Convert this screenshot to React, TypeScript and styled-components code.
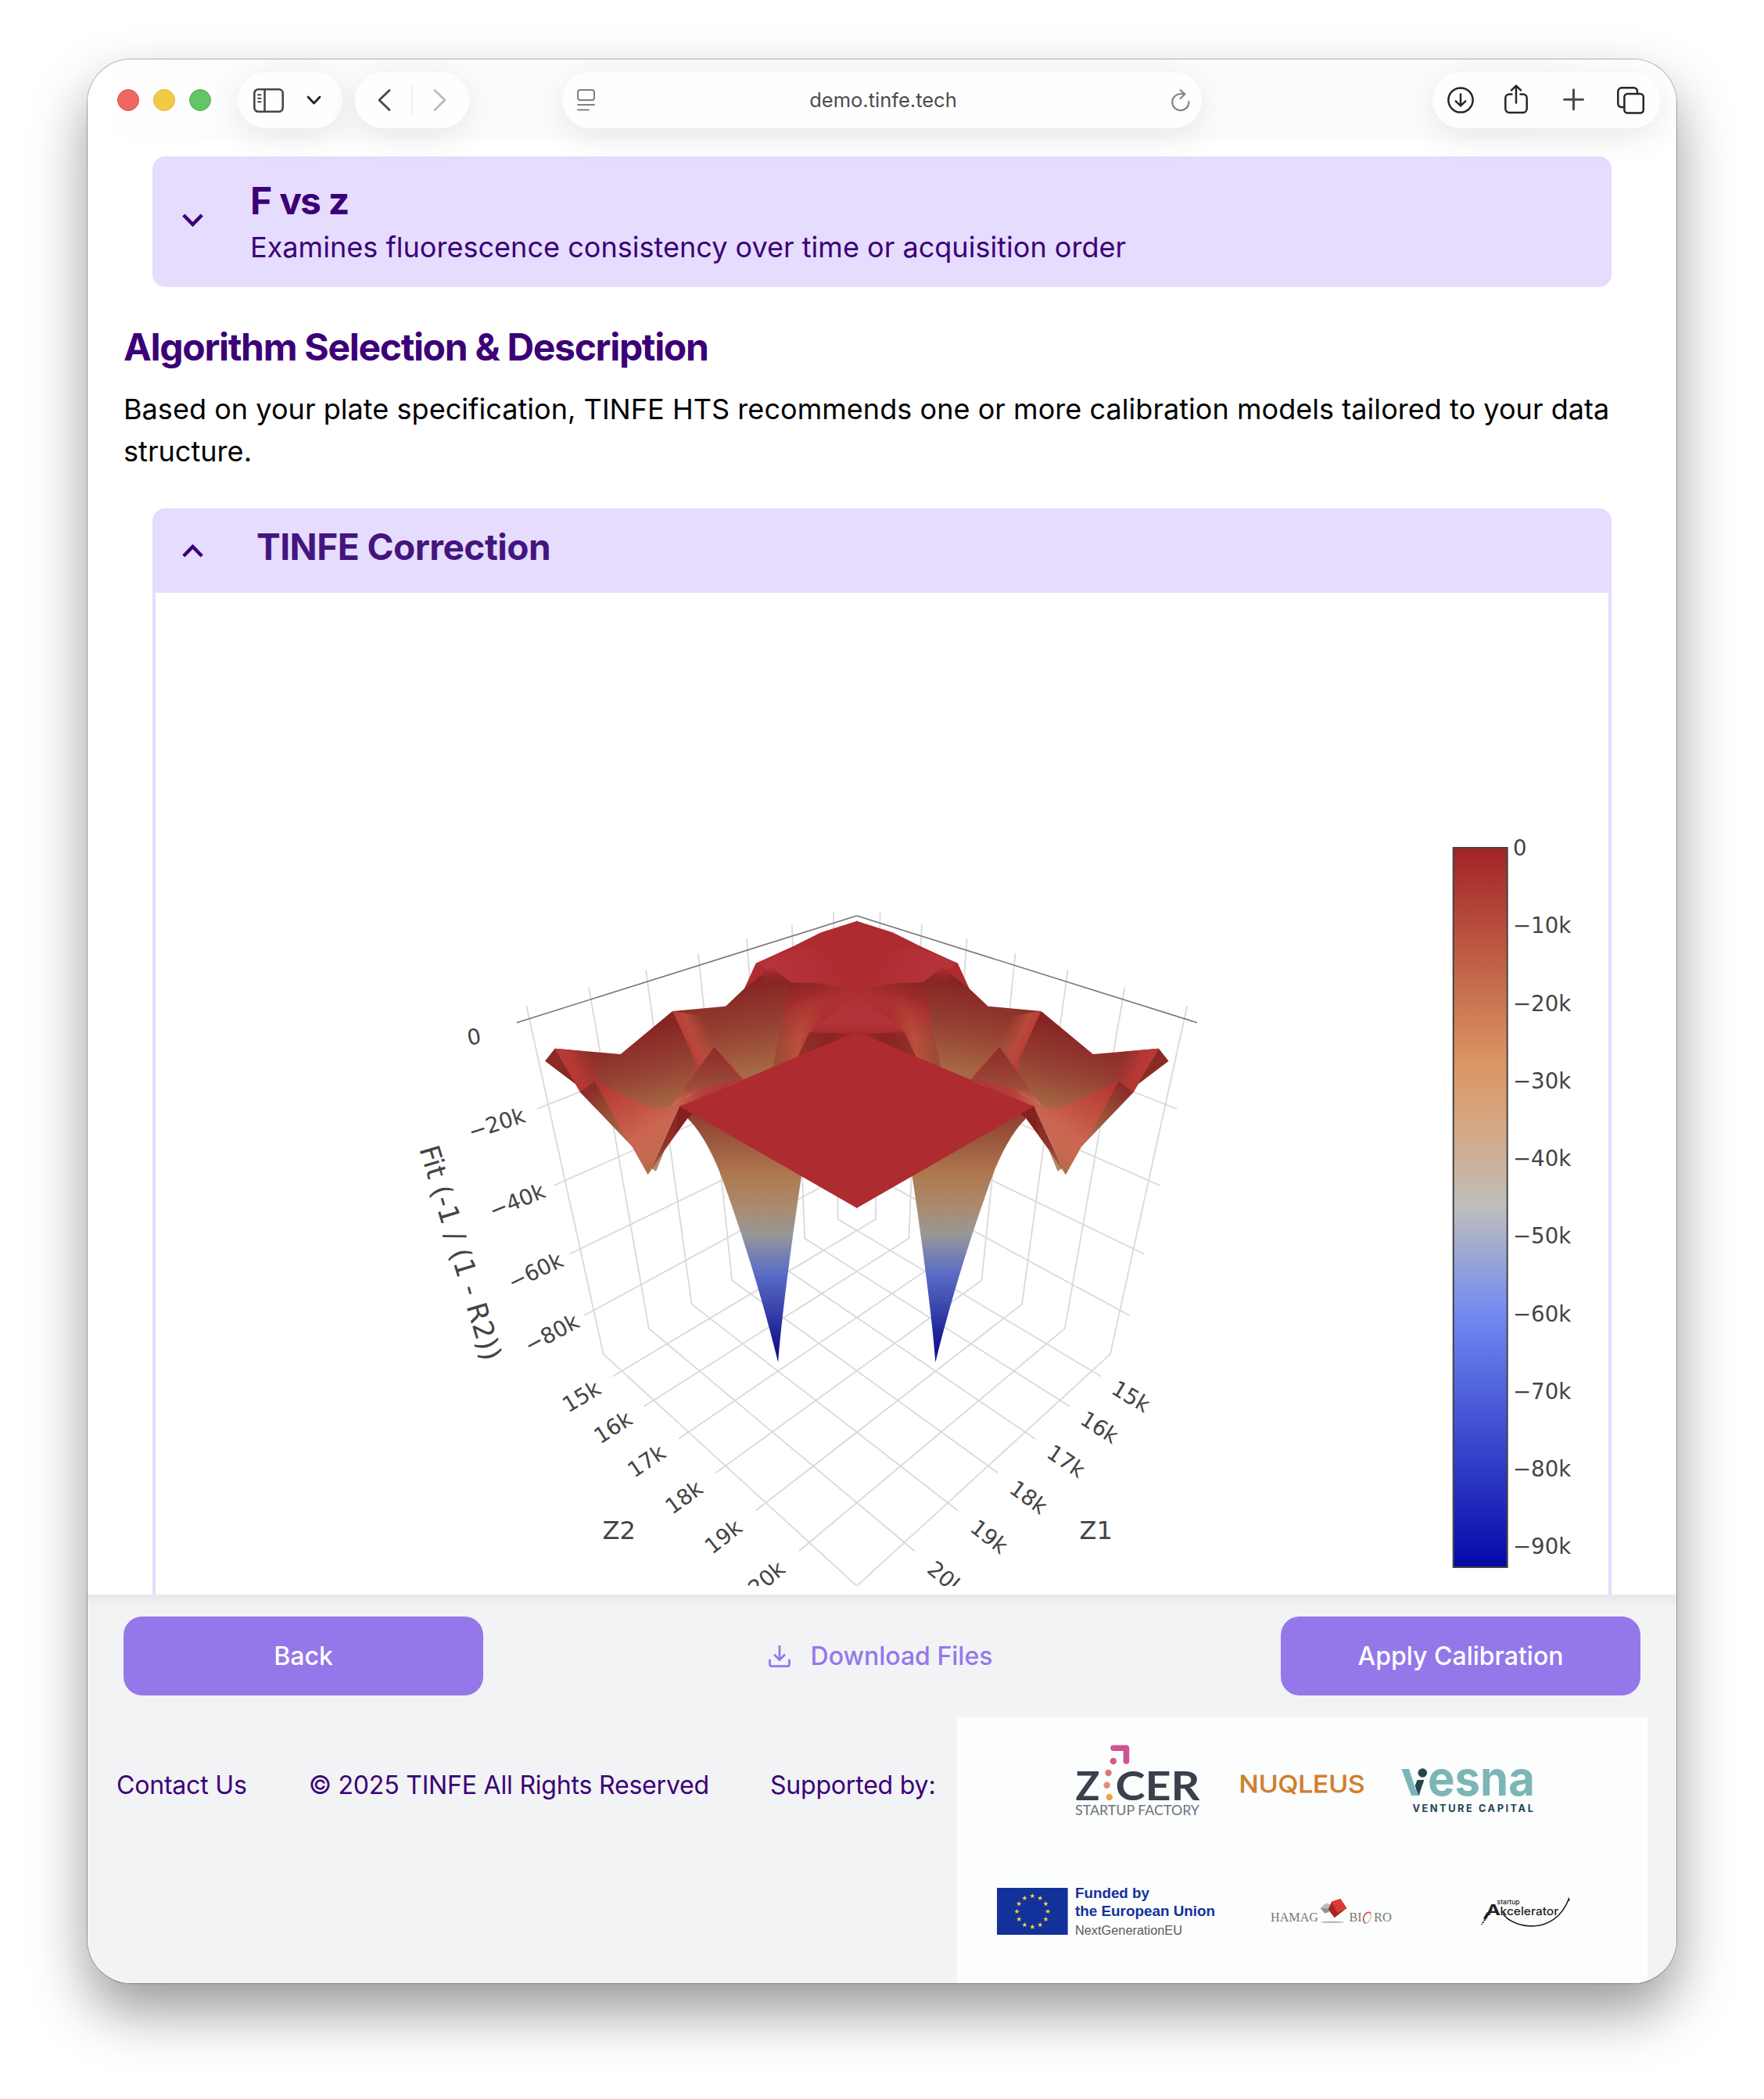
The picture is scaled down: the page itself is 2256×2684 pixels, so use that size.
import styled, { createGlobalStyle } from 'styled-components';

const GlobalStyle = createGlobalStyle`
  * {
    box-sizing: border-box;
  }
  body {
    margin: 0;
    background: #ffffff;
    font-family: Inter, 'Liberation Sans', sans-serif;
  }
  h2, h3, p {
    margin: 0;
  }
`;

const Desktop = styled.div`
  width: 2256px;
  height: 2684px;
  padding: 76px 112px 148px;
  overflow: hidden;
`;

const Window = styled.div`
  display: flex;
  flex-direction: column;
  height: 2460px;
  border-radius: 56px;
  overflow: hidden;
  background: #ffffff;
  box-shadow: 0 0 0 1px rgba(0, 0, 0, 0.28), 0 36px 72px rgba(0, 0, 0, 0.4);
`;

const Toolbar = styled.header`
  position: relative;
  z-index: 1;
  flex: none;
  display: flex;
  align-items: center;
  height: 104px;
  padding: 0 20px 0 38px;
  background: linear-gradient(90deg, #ffffff, #fcfbfe 12%, #fcfcfe 90%, #ffffff);
`;

const Lights = styled.div`
  display: flex;
  gap: 18px;
`;

const Light = styled.span<{ $fill: string; $edge: string }>`
  width: 28px;
  height: 28px;
  border-radius: 50%;
  background: ${(p) => p.$fill};
  border: 1px solid ${(p) => p.$edge};
`;

const Pill = styled.div<{ $width: number; $left?: string; $pad: string }>`
  display: flex;
  align-items: center;
  justify-content: space-between;
  width: ${(p) => p.$width}px;
  height: 72px;
  margin-left: ${(p) => p.$left ?? '16px'};
  padding: ${(p) => p.$pad};
  border-radius: 36px;
  background: #fffeff;
  box-shadow: 0 10px 44px rgba(0, 0, 0, 0.09);

  svg {
    display: block;
    flex: none;
    overflow: visible;
    fill: none;
    stroke-linecap: round;
    stroke-linejoin: round;
  }
`;

const Divider = styled.span`
  width: 2px;
  height: 40px;
  background: #f0eff1;
`;

const Address = styled.span`
  font-size: 25.5px;
  line-height: 32px;
  color: #4c4c4c;
`;

const Content = styled.main`
  flex: none;
  height: 1859px;
  padding-top: 20px;
  overflow: hidden;
`;

const Panel = styled.section`
  margin: 0 83px;
  border-radius: 16px;
  background: #e6dcfd;
  overflow: hidden;
  color: #3c0078;
`;

const PanelHeader = styled.div<{ $height: number; $lift?: number }>`
  display: flex;
  align-items: center;
  height: ${(p) => p.$height}px;
  padding-left: 38px;

  svg {
    display: block;
    flex: none;
    margin-bottom: ${(p) => p.$lift ?? 0}px;
  }
`;

const PanelText = styled.div`
  display: flex;
  flex-direction: column;
  gap: 2px;
  margin: 2px 0 0 60px;
`;

const PanelTitle = styled.h3`
  font-size: 48px;
  line-height: 60px;
  font-weight: 700;
  letter-spacing: -2px;
  word-spacing: 1.6px;
`;

const PanelSubtitle = styled.p`
  font-size: 36px;
  line-height: 54px;
  letter-spacing: 0.03px;
`;

const PlotTitle = styled.h3`
  margin-left: 68px;
  padding-bottom: 11px;
  font-size: 46px;
  line-height: 56px;
  font-weight: 700;
  letter-spacing: -0.5px;
  color: #43157f;
`;

const PanelBody = styled.div`
  height: 1400px;
  margin: 0 4px;
  background: #ffffff;

  svg {
    display: block;
  }
`;

const Intro = styled.div`
  padding: 47px 40px 46px 46px;
`;

const Heading = styled.h2`
  font-size: 48px;
  line-height: 60px;
  font-weight: 700;
  letter-spacing: -1.3px;
  color: #3c0078;
`;

const Paragraph = styled.p`
  margin-top: 22px;
  font-size: 36px;
  line-height: 54px;
  letter-spacing: 0.05px;
  color: #000000;
`;

const Footer = styled.footer`
  flex: 1;
  background: linear-gradient(#e6e8ea, #f2f3f5 16px);
`;

const Actions = styled.div`
  display: flex;
  align-items: center;
  justify-content: space-between;
  padding: 28px 46px;
`;

const Button = styled.button`
  width: 460px;
  height: 101px;
  border: 0;
  border-radius: 24px;
  background: #9478ea;
  color: #ffffff;
  font: 500 32px Inter, sans-serif;
`;

const DownloadLink = styled.a`
  display: flex;
  align-items: center;
  gap: 26px;
  margin-right: 4px;
  color: #9478ea;
  font-size: 32px;
  font-weight: 500;
`;

const Credits = styled.div`
  display: flex;
  height: 340px;
  padding: 0 37px;
  font-size: 32px;
  line-height: 48px;
  letter-spacing: -0.19px;
  color: #3c0078;
`;

const CreditText = styled.span<{ $gap?: number }>`
  margin: 63px ${(p) => p.$gap ?? 0}px 0 0;
  white-space: nowrap;
`;

const Supporters = styled.div`
  width: 883px;
  margin-left: auto;
  padding-top: 30px;
  background: #fcfdfd;
  letter-spacing: 0;
`;

const LogoRow = styled.div<{ $left: number; $top?: number }>`
  display: flex;
  margin: ${(p) => p.$top ?? 0}px 0 0 ${(p) => p.$left}px;

  svg {
    display: block;
    flex: none;
  }
`;

const Gap = styled.span<{ $width: number }>`
  width: ${(p) => p.$width}px;
`;

const Chevron = ({ up }: { up?: boolean }) => (
  <svg width="27" height="18" viewBox="0 0 27 18" fill="none" stroke="#3c0078" strokeWidth="4.6">
    <path d={up ? 'M1.8 16 L13.5 4 L25.2 16' : 'M1.8 2 L13.5 14 L25.2 2'} />
  </svg>
);

// ---------- chart ----------

const CX = 1095.8;
const mirror = (x: number) => 2 * CX - x;

type Point = [number, number];

// one entry per 1k tick: top of the wall, wall/floor kink, end of the floor line
const gridLines: [Point, Point, Point][] = [
  [[673.3, 1286.3], [771.7, 1731.6], [1110, 2041]],
  [[753, 1262.3], [829.8, 1698.8], [1169.6, 1983.3]],
  [[826, 1240], [884.6, 1667.6], [1225.2, 1931.7]],
  [[893, 1219.3], [936.2, 1637.3], [1276, 1883.3]],
  [[955, 1200.4], [984.5, 1609], [1323.6, 1839.7]],
  [[1012.8, 1182.3], [1029.2, 1583.4], [1367.8, 1798.3]],
  [[1066, 1166.3], [1071.7, 1559], [1408, 1760]],
];

const levels: [Point, number][] = [
  [[686.4, 1418], 1257],
  [[708.5, 1515.7], 1345],
  [[728.8, 1603.2], 1425.6],
  [[746.8, 1682.3], 1493],
];

const fitTicks: [string, number, number, number][] = [
  ['0', 606.2, 1325.4, -10],
  ['−20k', 635, 1436.2, -18],
  ['−40k', 661.2, 1535, -22],
  ['−60k', 684.6, 1625, -25.5],
  ['−80k', 705.4, 1704.5, -28],
];

const zTicks: [string, number, number, number][] = [
  ['15k', 1446.6, 1785.3, 31],
  ['16k', 1406.4, 1824.8, 32.5],
  ['17k', 1363.6, 1868, 34],
  ['18k', 1315.6, 1914.2, 36],
  ['19k', 1265.3, 1964.6, 38],
  ['20k', 1210, 2018, 40],
];

const scaleTicks = ['0', '−10k', '−20k', '−30k', '−40k', '−50k', '−60k', '−70k', '−80k', '−90k'];

const Grid = () => (
  <g fill="none" stroke="#d9d9d9" strokeWidth="1.8">
    {gridLines.map((line, i) => (
      <polyline key={i} points={line.join(' ')} />
    ))}
    {levels.map(([[x, y], cy]) => (
      <path key={y} d={`M${x} ${y} L${CX} ${cy}`} />
    ))}
    <path d={`M660.7 1307.7 L${CX} 1171`} stroke="#757575" strokeWidth="1.6" />
  </g>
);

const Surface = () => (
  <g>
    {/* rear plateau */}
    <path d="M1096.5 1177.5 L1050 1192.3 L1012.3 1211 L966.7 1231.7 L952 1264 L960 1290 L1096.5 1290 Z" fill="#ae2b30" />
    <path d="M966.7 1231.7 C990 1222 1010 1215 1030 1211 C1052 1210 1075 1222 1096.5 1230 L1096.5 1262 L1043 1256.7 L1012.3 1256.7 Z" fill="url(#plateau)" />
    {/* middle basin */}
    <path d="M952 1264 L986.7 1237.3 L1012.3 1256.7 L1043 1256.7 L1096.5 1268 L1096.5 1330 L988 1366 L950 1382 L880 1400 L860 1293 L928 1286.7 Z" fill="url(#basin)" />
    <path d="M860 1293 L890 1358.3 L886 1378 L914 1350 L940 1350 L905 1300 Z" fill="url(#rib)" />
    <path d="M976 1246 L986.7 1237 L1003 1250 L996 1262 L978 1262 Z" fill="url(#hump)" />
    <path d="M1010 1257 L1043 1256.7 L1096.5 1268 L1096.5 1330 L988 1366 L1000 1305 Z" fill="url(#flank)" />
    <path d="M1010 1256.7 L1043 1256.7 L1096.5 1268 L1040 1316 L1000 1330 L1003 1290 Z" fill="url(#flankTop)" />
    <path d="M1096.5 1268.3 L1035 1320 L1076 1321.5 L1096.5 1319.5 Z" fill="url(#wedge)" />
    <path d="M1035 1320 L1076 1321.5 L1096.5 1320 L1020 1352 Z" fill="url(#pocket)" />
    {/* outer basin */}
    <path d="M709.7 1340.7 L793.7 1348 L860 1293 L890 1358.3 L886.7 1376.7 L872 1420 L820 1424 L742 1396.7 Z" fill="url(#outer)" />
    <path d="M709.7 1340.7 L765 1345.5 L785 1395 L760.7 1382.3 L742 1396.7 L735.7 1385.3 Z" fill="url(#outerFlank)" />
    <path d="M697 1356.7 L709.7 1340.7 L737 1387 Z" fill="#8a2a27" />
    {/* small peak */}
    <path d="M914 1337.7 L951 1381 L896.7 1391.7 L858.3 1415 Z" fill="url(#peak)" />
    <path d="M914 1337.7 L951 1381 L947 1382" fill="none" stroke="#bd4a3a" strokeWidth="1.5" />
    <path d="M950 1380.5 L896.7 1391.7 L858.3 1415 L870 1416 Z" fill="url(#peakFoot)" />
    {/* front dip */}
    <path d="M742 1396.7 L760.7 1382.3 L812 1468 L808.3 1466 Z" fill="url(#dipShade)" />
    <path d="M850 1470.7 L839 1497.7 L832 1493 Z" fill="#b08a62" />
    <path d="M760.7 1382.3 C785 1392 800 1402 820 1410 C833 1416.5 847 1417 858.3 1414.5 L870 1414 L850 1456 L828.7 1502.3 L808.3 1466 L797 1450 Z" fill="url(#dip)" />
    <path d="M869.3 1414.7 L890 1422 L879.3 1430 L850 1470.7 L828.7 1502.3 Z" fill="url(#fold)" />
    {/* spike */}
    <path d="M868 1414 L884 1419 L879.6 1430.6 C896 1446 912 1476 922.8 1505 C940 1552 970 1640 995.2 1742 C999 1690 1012 1590 1025 1504 L1030 1430 L900 1410 Z" fill="url(#spike)" />
    <path d="M869.3 1414.7 L892 1420 L879.3 1430 L864 1450 Z" fill="#84211f" />
    <path d="M869.3 1414.7 L1096.3 1319 V1545 Z" fill="#ae2b30" />
  </g>
);

const SurfacePaints = () => (
  <defs>
    <linearGradient id="scale" x1="0" y1="0" x2="0" y2="1">
      <stop offset="0" stopColor="#a22325" />
      <stop offset="0.3" stopColor="#db9664" />
      <stop offset="0.4" stopColor="#d3aa88" />
      <stop offset="0.5" stopColor="#bebebc" />
      <stop offset="0.65" stopColor="#7089f2" />
      <stop offset="1" stopColor="#0508a8" />
    </linearGradient>
    <linearGradient id="plateau" gradientUnits="userSpaceOnUse" x1="1000" y1="1256" x2="1075" y2="1220">
      <stop offset="0" stopColor="#b4343a" />
      <stop offset="1" stopColor="#ae2b30" />
    </linearGradient>
    <linearGradient id="basin" gradientUnits="userSpaceOnUse" x1="930" y1="1260" x2="950" y2="1384">
      <stop offset="0" stopColor="#862423" />
      <stop offset="0.45" stopColor="#954032" />
      <stop offset="1" stopColor="#aa7046" />
    </linearGradient>
    <linearGradient id="rib" gradientUnits="userSpaceOnUse" x1="876" y1="1328" x2="905" y2="1316">
      <stop offset="0" stopColor="#bb3e35" />
      <stop offset="0.35" stopColor="#b84a3a" />
      <stop offset="1" stopColor="#b84a3a" stopOpacity="0" />
    </linearGradient>
    <linearGradient id="hump" gradientUnits="userSpaceOnUse" x1="0" y1="1240" x2="0" y2="1262">
      <stop offset="0" stopColor="#ae2b30" />
      <stop offset="1" stopColor="#862423" stopOpacity="0" />
    </linearGradient>
    <linearGradient id="flank" gradientUnits="userSpaceOnUse" x1="992" y1="1310" x2="1048" y2="1322">
      <stop offset="0" stopColor="#93382c" stopOpacity="0.2" />
      <stop offset="0.25" stopColor="#a34a36" />
      <stop offset="0.6" stopColor="#bb4f3c" />
      <stop offset="1" stopColor="#a92a2c" />
    </linearGradient>
    <linearGradient id="flankTop" gradientUnits="userSpaceOnUse" x1="1006" y1="1258" x2="1030" y2="1328">
      <stop offset="0" stopColor="#8a2424" />
      <stop offset="0.3" stopColor="#9d2b29" />
      <stop offset="0.5" stopColor="#ac3230" stopOpacity="0.8" />
      <stop offset="1" stopColor="#b03a33" stopOpacity="0" />
    </linearGradient>
    <linearGradient id="wedge" gradientUnits="userSpaceOnUse" x1="0" y1="1268" x2="0" y2="1322">
      <stop offset="0" stopColor="#b03035" />
      <stop offset="0.75" stopColor="#b33438" />
      <stop offset="1" stopColor="#a82a2c" />
    </linearGradient>
    <linearGradient id="pocket" gradientUnits="userSpaceOnUse" x1="1025" y1="0" x2="1096" y2="0">
      <stop offset="0" stopColor="#8f3029" />
      <stop offset="0.5" stopColor="#882323" />
      <stop offset="1" stopColor="#a82a2c" />
    </linearGradient>
    <linearGradient id="outer" gradientUnits="userSpaceOnUse" x1="810" y1="1318" x2="835" y2="1420">
      <stop offset="0" stopColor="#882524" />
      <stop offset="0.5" stopColor="#954033" />
      <stop offset="1" stopColor="#a66743" />
    </linearGradient>
    <linearGradient id="outerFlank" gradientUnits="userSpaceOnUse" x1="726" y1="1370" x2="768" y2="1352">
      <stop offset="0" stopColor="#b93a34" />
      <stop offset="0.3" stopColor="#b43732" />
      <stop offset="1" stopColor="#94302b" stopOpacity="0" />
    </linearGradient>
    <linearGradient id="peak" gradientUnits="userSpaceOnUse" x1="0" y1="1338" x2="0" y2="1412">
      <stop offset="0" stopColor="#8c2b28" />
      <stop offset="0.7" stopColor="#9d4a38" />
      <stop offset="1" stopColor="#cf6d56" />
    </linearGradient>
    <linearGradient id="peakFoot" gradientUnits="userSpaceOnUse" x1="862" y1="0" x2="945" y2="0">
      <stop offset="0" stopColor="#cc6650" />
      <stop offset="0.4" stopColor="#b5403a" />
      <stop offset="1" stopColor="#b03032" />
    </linearGradient>
    <linearGradient id="dipShade" gradientUnits="userSpaceOnUse" x1="752" y1="1390" x2="805" y2="1466">
      <stop offset="0" stopColor="#8a2a27" />
      <stop offset="1" stopColor="#aa7848" />
    </linearGradient>
    <linearGradient id="dip" gradientUnits="userSpaceOnUse" x1="762" y1="1388" x2="832" y2="1498">
      <stop offset="0" stopColor="#b33430" />
      <stop offset="0.4" stopColor="#c25243" />
      <stop offset="0.65" stopColor="#cb6650" />
      <stop offset="0.85" stopColor="#c56a50" />
      <stop offset="1" stopColor="#b5664a" />
    </linearGradient>
    <linearGradient id="fold" gradientUnits="userSpaceOnUse" x1="875" y1="1415" x2="835" y2="1500">
      <stop offset="0" stopColor="#821f20" />
      <stop offset="0.6" stopColor="#93352b" />
      <stop offset="1" stopColor="#b0674a" />
    </linearGradient>
    <linearGradient id="spike" gradientUnits="userSpaceOnUse" x1="0" y1="1420" x2="0" y2="1742">
      <stop offset="0" stopColor="#8f3a2e" />
      <stop offset="0.14" stopColor="#9e5c40" />
      <stop offset="0.25" stopColor="#ae784e" />
      <stop offset="0.38" stopColor="#ab8a6c" />
      <stop offset="0.49" stopColor="#989896" />
      <stop offset="0.57" stopColor="#7882b2" />
      <stop offset="0.65" stopColor="#5a6cc4" />
      <stop offset="0.78" stopColor="#3c47ae" />
      <stop offset="0.9" stopColor="#1c2096" />
      <stop offset="1" stopColor="#0a0c86" />
    </linearGradient>
  </defs>
);

const flip = `translate(${2 * CX} 0) scale(-1 1)`;

const Tick = ({ label, x, y, angle }: { label: string; x: number; y: number; angle: number }) => (
  <text x={x} y={y + 10} textAnchor="middle" transform={`rotate(${angle} ${x} ${y})`}>
    {label}
  </text>
);

const SurfacePlot = () => (
  <svg width="1858" height="1270" viewBox="199 758 1858 1270">
    <SurfacePaints />
    <Grid />
    <g transform={flip}>
      <Grid />
    </g>
    <Surface />
    <g transform={flip}>
      <Surface />
    </g>
    <g fill="#444444" fontFamily="'DejaVu Sans', Verdana, sans-serif" fontSize="27.6">
      {fitTicks.map(([label, x, y, angle]) => (
        <Tick key={label} label={label} x={x} y={y} angle={angle} />
      ))}
      {zTicks.map(([label, x, y, angle]) => (
        <g key={label}>
          <Tick label={label} x={x} y={y} angle={angle} />
          <Tick label={label} x={mirror(x) - 1.5} y={y} angle={-angle} />
        </g>
      ))}
      <text x="588.5" y="1614" fontSize="35.5" textAnchor="middle" textLength="285" transform="rotate(73.3 588.5 1602)">
        Fit (-1 / (1 - R2))
      </text>
      <text x="770.5" y="1968" fontSize="32">Z2</text>
      <text x="1380.5" y="1968" fontSize="32">Z1</text>
      {scaleTicks.map((label, i) => (
        <text key={label} x="1935" y={1094 + i * 99.25}>
          {label}
        </text>
      ))}
    </g>
    <rect x="1858.7" y="1084" width="69" height="920" fill="url(#scale)" stroke="#444444" strokeWidth="2" />
  </svg>
);

// ---------- supporter logos ----------

const ZicerLogo = () => (
  <svg width="170" height="100" viewBox="0 0 170 100">
    <path d="M54 9.2 H70.4 V26" fill="none" stroke="#cf5490" strokeWidth="7.6" strokeLinecap="round" strokeLinejoin="round" />
    <circle cx="53.8" cy="26" r="4.2" fill="#cf5c84" />
    <circle cx="47.5" cy="41" r="4.2" fill="#d9787e" />
    <circle cx="45.6" cy="56.7" r="4.2" fill="#df9174" />
    <circle cx="48.8" cy="72" r="4.2" fill="#e6a640" />
    <g fill="#3c3f4c" fontFamily="Lato, sans-serif" fontWeight="700" fontSize="51.5">
      <text x="5.5" y="75.8" textLength="31" lengthAdjust="spacingAndGlyphs">Z</text>
      <text x="56.5" y="75.8" textLength="108" lengthAdjust="spacingAndGlyphs">CER</text>
    </g>
    <text x="5" y="95" fill="#6d707b" fontFamily="Lato, sans-serif" fontSize="16.6" textLength="159" lengthAdjust="spacingAndGlyphs">
      STARTUP FACTORY
    </text>
  </svg>
);

const NuqleusLogo = () => (
  <svg width="170" height="100" viewBox="0 0 170 100">
    <text x="4.5" y="66.4" fill="#cf7f2f" stroke="#cf7f2f" strokeWidth="0.8" strokeLinejoin="round" fontFamily="Inter, sans-serif" fontWeight="400" fontSize="30" textLength="161" lengthAdjust="spacingAndGlyphs">
      NUQLEUS
    </text>
  </svg>
);

const VesnaLogo = () => (
  <svg width="180" height="100" viewBox="0 0 180 100">
    <clipPath id="vesna-arm">
      <path d="M0 30 H15.5 L28 62 V75 H0 Z" />
    </clipPath>
    <g fill="#7cb5b5" fontFamily="Inter, sans-serif" fontWeight="700" fontSize="62">
      <text x="3.5" y="70" clipPath="url(#vesna-arm)">v</text>
      <text x="38" y="70" textLength="137" lengthAdjust="spacingAndGlyphs">esna</text>
    </g>
    <path d="M24.6 50 H33.4 L26.6 69.6 L21.6 57.5 Z" fill="#27454f" />
    <circle cx="31.3" cy="41" r="5.8" fill="#27454f" />
    <text x="18.4" y="91" fill="#234450" fontFamily="Inter, sans-serif" fontWeight="700" fontSize="12.8" textLength="154.5">
      VENTURE CAPITAL
    </text>
  </svg>
);

const star = Array.from({ length: 10 }, (_, i) => {
  const r = i % 2 ? 1.4 : 3.5;
  const a = (i * Math.PI) / 5;
  return `${(r * Math.sin(a)).toFixed(2)},${(-r * Math.cos(a)).toFixed(2)}`;
}).join(' ');

const EuLogo = () => (
  <svg width="285" height="90" viewBox="0 0 285 90">
    <rect y="14" width="90.6" height="60" fill="#12319a" />
    {Array.from({ length: 12 }, (_, i) => (
      <polygon
        key={i}
        points={star}
        fill="#f4d03c"
        transform={`translate(${45.3 + 19.8 * Math.sin((i * Math.PI) / 6)} ${44.2 - 19.8 * Math.cos((i * Math.PI) / 6)})`}
      />
    ))}
    <g fontFamily="'Liberation Sans', Arial, sans-serif" fill="#12319a">
      <text x="100" y="27.3" fontSize="18.6" fontWeight="700" textLength="95" lengthAdjust="spacingAndGlyphs">Funded by</text>
      <text x="100" y="49.8" fontSize="18.6" fontWeight="700" textLength="179" lengthAdjust="spacingAndGlyphs">the European Union</text>
      <text x="100" y="73.8" fontSize="16" fill="#5a5a5a" textLength="137" lengthAdjust="spacingAndGlyphs">NextGenerationEU</text>
    </g>
  </svg>
);

const HamagLogo = () => (
  <svg width="165" height="90" viewBox="0 0 165 90">
    <g fill="#77787b" fontFamily="'Liberation Serif', serif" fontSize="17.4">
      <text x="5" y="56.6" textLength="61" lengthAdjust="spacingAndGlyphs">HAMAG</text>
      <text x="105.6" y="56.6" textLength="16" lengthAdjust="spacingAndGlyphs">BI</text>
      <text x="137" y="56.6" textLength="23" lengthAdjust="spacingAndGlyphs">RO</text>
    </g>
    <g fill="none" transform="rotate(22 128.3 52.3)">
      <path d="M131 45.4 A5 7.2 0 1 0 130 59" stroke="#d9403a" strokeWidth="1.5" />
      <path d="M130 46 A5 7.2 0 0 1 128 59.6" stroke="#b9babc" strokeWidth="1.2" />
    </g>
    <ellipse cx="84" cy="57.8" rx="15" ry="1.3" fill="#b8b8bb" />
    <path d="M68.7 40 L76 33.7 L82.3 36 L79.3 45 L74.3 46.7 Z" fill="#929396" />
    <path d="M68.7 40 L76 33.7 L82.3 36 L78 40.6 Z" fill="#b9babc" />
    <path d="M80 39 L83 31.7 L94.3 28 L102.3 40 L86.7 52.3 L79 42 Z" fill="#a32622" />
    <path d="M83 31.7 L94.3 28 L102.3 40 L90.5 46 Z" fill="#dc3a34" />
  </svg>
);

const AkceleratorLogo = () => (
  <svg width="125" height="90" viewBox="0 0 125 90">
    <g fill="#231f20" fontFamily="Inter, sans-serif">
      <text x="24.6" y="35" fontSize="8.6" fontWeight="500" textLength="29" lengthAdjust="spacingAndGlyphs">startup</text>
      <text x="10.6" y="48.6" fontSize="19" fontWeight="700" textLength="18.5" lengthAdjust="spacingAndGlyphs">A</text>
      <text x="28.6" y="48.6" fontSize="14.6" fontWeight="500" textLength="74.6" lengthAdjust="spacingAndGlyphs">kcelerator</text>
    </g>
    <path d="M13.4 46 L8.6 54" stroke="#231f20" strokeWidth="3.8" />
    <path d="M9 54.5 L5 61" stroke="#231f20" strokeWidth="2" strokeDasharray="2 1.4" />
    <path d="M32 47 C46 67 98 75 116 29" fill="none" stroke="#231f20" strokeWidth="1.6" />
    <path d="M114.4 32 L116 25.6 L117.8 30 Z" fill="#231f20" />
  </svg>
);

export default function App() {
  return (
    <Desktop>
      <GlobalStyle />
      <Window>
        <Toolbar>
          <Lights>
            <Light $fill="#ee6765" $edge="#e04a46" />
            <Light $fill="#f3ca43" $edge="#dcb243" />
            <Light $fill="#63c565" $edge="#4fb044" />
          </Lights>
          <Pill $width={134} $left="34px" $pad="0 27px 0 20px">
            <svg width="39" height="31" viewBox="0 0 39 31" stroke="#474747" strokeWidth="2.6">
              <rect x="1.3" y="1.3" width="36.4" height="28.4" rx="5" />
              <path d="M14.5 1.5 V29.5" />
              <path d="M6 8.3 H9.5 M6 12.8 H9.5 M6 17.3 H9.5" strokeWidth="2" />
            </svg>
            <svg width="19" height="12" viewBox="0 0 19 12" stroke="#222222" strokeWidth="2.7">
              <path d="M2 2 L9.5 10 L17 2" />
            </svg>
          </Pill>
          <Pill $width={146} $pad="0 29px">
            <svg width="17" height="28" viewBox="0 0 17 28" stroke="#474747" strokeWidth="2.8">
              <path d="M15 1.5 L2 14 L15 26.5" />
            </svg>
            <Divider />
            <svg width="17" height="28" viewBox="0 0 17 28" stroke="#bbbabc" strokeWidth="2.8">
              <path d="M2 1.5 L15 14 L2 26.5" />
            </svg>
          </Pill>
          <Pill $width={818} $left="119px" $pad="0 15px 0 19px">
            <svg width="23" height="28" viewBox="0 0 23 28" stroke="#818183" strokeWidth="2">
              <rect x="1" y="1" width="21" height="13" rx="3" />
              <path d="M1 20 H22 M1 26.5 H15" />
            </svg>
            <Address>demo.tinfe.tech</Address>
            <svg width="24" height="28" viewBox="0 0 24 28" stroke="#818183" strokeWidth="2.1">
              <path d="M12.5 6 A10.6 10.6 0 1 0 22.4 16" />
              <path d="M16 6 H12 M11.5 1.2 L17.4 6.2 L11.5 12" />
            </svg>
          </Pill>
          <Pill $width={292} $left="auto" $pad="0 21px 0 19px">
            <svg width="34" height="34" viewBox="0 0 34 34" stroke="#262626" strokeWidth="2.5">
              <circle cx="17" cy="17" r="15.6" />
              <path d="M17 9.4 V24 M10.8 18.4 L17 24.4 L23.2 18.4" />
            </svg>
            <svg width="24" height="38" viewBox="3 0 24 38" stroke="#262626" strokeWidth="2.5">
              <g transform="translate(-2 -1)">
                <path d="M9.5 12.5 H6.3 A5 5 0 0 0 1.3 17.5 V31 A5 5 0 0 0 6.3 36 H23.7 A5 5 0 0 0 28.7 31 V17.5 A5 5 0 0 0 23.7 12.5 H20.5" />
                <path d="M15 2 V23.4 M9 7.4 L15 1.6 L21 7.4" />
              </g>
            </svg>
            <svg width="27" height="28" viewBox="0 0 27 28" stroke="#4b4b4b" strokeWidth="3">
              <path d="M13.5 1.5 V26.5 M1.5 14 H25.5" transform="translate(2 -0.7)" />
            </svg>
            <svg width="35" height="35" viewBox="0 0 35 35" stroke="#262626" strokeWidth="2.5">
              <rect x="9.4" y="9" width="24.4" height="24.6" rx="4" />
              <path d="M9 26 H6 A4.5 4.5 0 0 1 1.3 21.5 V6 A4.7 4.7 0 0 1 6 1.3 H21.5 A4.5 4.5 0 0 1 26 6 V9" />
            </svg>
          </Pill>
        </Toolbar>

        <Content>
          <Panel>
            <PanelHeader $height={167} $lift={4}>
              <Chevron />
              <PanelText>
                <PanelTitle>F vs z</PanelTitle>
                <PanelSubtitle>Examines fluorescence consistency over time or acquisition order</PanelSubtitle>
              </PanelText>
            </PanelHeader>
          </Panel>

          <Intro>
            <Heading>Algorithm Selection &amp; Description</Heading>
            <Paragraph>
              Based on your plate specification, TINFE HTS recommends one or more calibration models tailored to your data
              structure.
            </Paragraph>
          </Intro>

          <Panel>
            <PanelHeader $height={108}>
              <Chevron up />
              <PlotTitle>TINFE Correction</PlotTitle>
            </PanelHeader>
            <PanelBody>
              <SurfacePlot />
            </PanelBody>
          </Panel>
        </Content>

        <Footer>
          <Actions>
            <Button>Back</Button>
            <DownloadLink>
              <svg width="28" height="28" viewBox="0 0 28 28" fill="none" stroke="#9478ea" strokeWidth="2.8">
                <path d="M1.5 19 V24 A2.6 2.6 0 0 0 4 26.6 H24 A2.6 2.6 0 0 0 26.5 24 V19" strokeLinecap="round" />
                <path d="M14 0 V17 M7 11.5 L14 18.5 L21 11.5" />
              </svg>
              Download Files
            </DownloadLink>
            <Button>Apply Calibration</Button>
          </Actions>
          <Credits>
            <CreditText $gap={79}>Contact Us</CreditText>
            <CreditText $gap={78}>© 2025 TINFE All Rights Reserved</CreditText>
            <CreditText>Supported by:</CreditText>
            <Supporters>
              <LogoRow $left={146}>
                <ZicerLogo />
                <Gap $width={40} />
                <NuqleusLogo />
                <Gap $width={38} />
                <VesnaLogo />
              </LogoRow>
              <LogoRow $left={51} $top={74}>
                <EuLogo />
                <Gap $width={60} />
                <HamagLogo />
                <Gap $width={105} />
                <AkceleratorLogo />
              </LogoRow>
            </Supporters>
          </Credits>
        </Footer>
      </Window>
    </Desktop>
  );
}
